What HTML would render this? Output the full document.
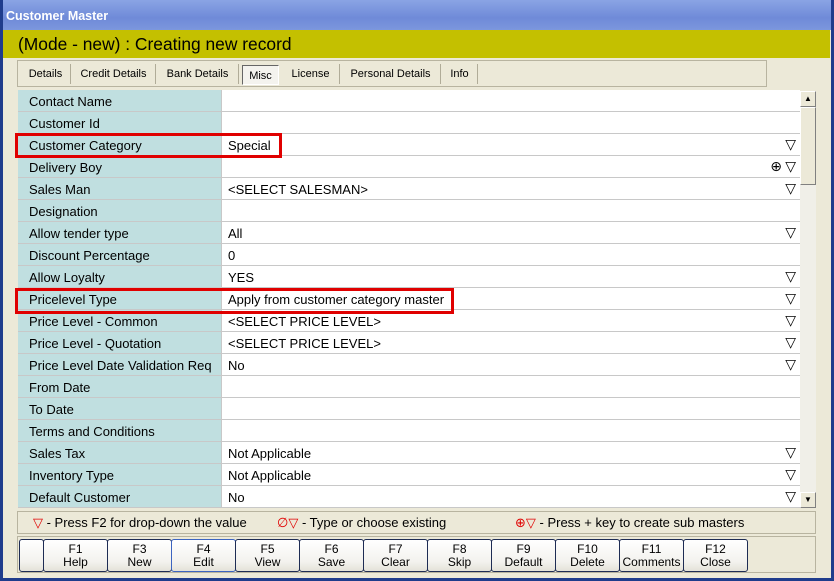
<!DOCTYPE html>
<html><head><meta charset="utf-8"><style>
*{margin:0;padding:0;box-sizing:border-box}
body{width:834px;height:581px;overflow:hidden;background:#ece9d8;font-family:"Liberation Sans",Arial,sans-serif;font-size:12px;color:#000;position:relative}
.frame{position:absolute;left:0;top:0;width:834px;height:581px;border:3px solid #1f3c8c;border-top:none}
.title{position:absolute;left:0;top:0;width:834px;height:30px;background:linear-gradient(#8aa4e4,#6f8ad8 60%,#7c97dd);color:#fff;font-weight:bold;font-size:12.5px;padding:9px 0 0 6px}
.banner{position:absolute;left:3px;top:30px;width:827px;height:28px;background:#c4c000;font-size:17.4px;padding:4px 0 0 15px}
.tabs{position:absolute;left:17px;top:60px;width:750px;height:27px;border:1px solid #b8b4a0;background:#ece9d8}
.tab{position:absolute;top:3px;height:20px;font-size:11px;padding-top:4px;text-align:center;border-right:1px solid #b0ac98}
.tab.sel{border:1px solid #666;border-right-color:#fff;border-bottom-color:#fff;background:#f4f3ee;top:4px}
.grid{position:absolute;left:18px;top:90px;width:782px;font-size:13px}
.row{height:22px;border-bottom:1px solid #c8c8c8;display:flex;position:relative}
.lab{width:203px;background:#c0dfe0;padding:4px 0 0 11px;white-space:nowrap;overflow:hidden}
.val{flex:1;background:#fff;padding:4px 0 0 6px;border-left:1px solid #c8c8c8}
.dd{position:absolute;right:4px;top:3px;font-size:14px;font-family:"DejaVu Sans",sans-serif;font-weight:normal}
.pl{position:absolute;right:18px;top:3px;font-size:14px;font-family:"DejaVu Sans",sans-serif}
.red{position:absolute;border:3px solid #e00000}
.sb{position:absolute;left:800px;top:91px;width:16px;height:417px;background:#f0efe8}
.sbb{position:absolute;left:0;width:16px;height:16px;background:#ece9d8;border:1px solid #fff;border-right-color:#808080;border-bottom-color:#808080;font-size:8px;text-align:center;line-height:14px}
.thumb{position:absolute;left:0;top:16px;width:16px;height:78px;background:#ece9d8;border:1px solid #fff;border-right-color:#808080;border-bottom-color:#808080}
.legend{position:absolute;left:17px;top:511px;width:799px;height:23px;border:1px solid #b8b4a0;font-size:13px}
.legend span{position:absolute;top:3px;white-space:nowrap}
.r{color:#e00000;font-family:"DejaVu Sans",sans-serif}
.btns{position:absolute;left:17px;top:536px;width:799px;height:37px;border:1px solid #b8b4a0}
.b{position:absolute;top:2px;height:33px;border:1px solid #1e2c54;border-radius:3px;background:linear-gradient(#fff,#f3f2ee 70%,#e4e2d8);text-align:center;font-size:12px;line-height:13px;padding-top:3px}
</style></head><body>
<div class="title">Customer Master</div>
<div class="banner">(Mode - new) : Creating new record</div>
<div class="tabs">
<div class="tab" style="left:3px;width:50px">Details</div>
<div class="tab" style="left:54px;width:84px">Credit Details</div>
<div class="tab" style="left:139px;width:82px">Bank Details</div>
<div class="tab sel" style="left:224px;width:37px">Misc</div>
<div class="tab" style="left:264px;width:58px">License</div>
<div class="tab" style="left:323px;width:100px">Personal Details</div>
<div class="tab" style="left:424px;width:36px">Info</div>
</div>
<div class="grid">
<div class="row"><div class="lab">Contact Name</div><div class="val"></div></div>
<div class="row"><div class="lab">Customer Id</div><div class="val"></div></div>
<div class="row"><div class="lab">Customer Category</div><div class="val">Special</div><span class="dd">▽</span></div>
<div class="row"><div class="lab">Delivery Boy</div><div class="val"></div><span class="pl">⊕</span><span class="dd">▽</span></div>
<div class="row"><div class="lab">Sales Man</div><div class="val">&lt;SELECT SALESMAN&gt;</div><span class="dd">▽</span></div>
<div class="row"><div class="lab">Designation</div><div class="val"></div></div>
<div class="row"><div class="lab">Allow tender type</div><div class="val">All</div><span class="dd">▽</span></div>
<div class="row"><div class="lab">Discount Percentage</div><div class="val">0</div></div>
<div class="row"><div class="lab">Allow Loyalty</div><div class="val">YES</div><span class="dd">▽</span></div>
<div class="row"><div class="lab">Pricelevel Type</div><div class="val">Apply from customer category master</div><span class="dd">▽</span></div>
<div class="row"><div class="lab">Price Level - Common</div><div class="val">&lt;SELECT PRICE LEVEL&gt;</div><span class="dd">▽</span></div>
<div class="row"><div class="lab">Price Level - Quotation</div><div class="val">&lt;SELECT PRICE LEVEL&gt;</div><span class="dd">▽</span></div>
<div class="row"><div class="lab">Price Level Date Validation Req</div><div class="val">No</div><span class="dd">▽</span></div>
<div class="row"><div class="lab">From Date</div><div class="val"></div></div>
<div class="row"><div class="lab">To Date</div><div class="val"></div></div>
<div class="row"><div class="lab">Terms and Conditions</div><div class="val"></div></div>
<div class="row"><div class="lab">Sales Tax</div><div class="val">Not Applicable</div><span class="dd">▽</span></div>
<div class="row"><div class="lab">Inventory Type</div><div class="val">Not Applicable</div><span class="dd">▽</span></div>
<div class="row"><div class="lab">Default Customer</div><div class="val">No</div><span class="dd">▽</span></div>
</div>
<div class="red" style="left:15px;top:133px;width:267px;height:25px"></div>
<div class="red" style="left:15px;top:288px;width:439px;height:26px"></div>
<div class="sb"><div class="sbb" style="top:0">▲</div><div class="thumb"></div><div class="sbb" style="top:401px">▼</div></div>
<div class="legend">
<span style="left:15px"><span class="r" style="position:static">▽</span> - Press F2 for drop-down the value</span>
<span style="left:259px"><span class="r" style="position:static">∅▽</span> - Type or choose existing</span>
<span style="left:497px"><span class="r" style="position:static">⊕▽</span> - Press + key to create sub masters</span>
</div>
<div class="btns">
<div class="b" style="left:1px;width:25px"></div>
<div class="b" style="left:25px;width:65px">F1<br>Help</div>
<div class="b" style="left:89px;width:65px">F3<br>New</div>
<div class="b" style="left:153px;width:65px;border-color:#3c64c0">F4<br>Edit</div>
<div class="b" style="left:217px;width:65px">F5<br>View</div>
<div class="b" style="left:281px;width:65px">F6<br>Save</div>
<div class="b" style="left:345px;width:65px">F7<br>Clear</div>
<div class="b" style="left:409px;width:65px">F8<br>Skip</div>
<div class="b" style="left:473px;width:65px">F9<br>Default</div>
<div class="b" style="left:537px;width:65px">F10<br>Delete</div>
<div class="b" style="left:601px;width:65px">F11<br>Comments</div>
<div class="b" style="left:665px;width:65px">F12<br>Close</div>
</div>
<div class="frame"></div>
</body></html>
